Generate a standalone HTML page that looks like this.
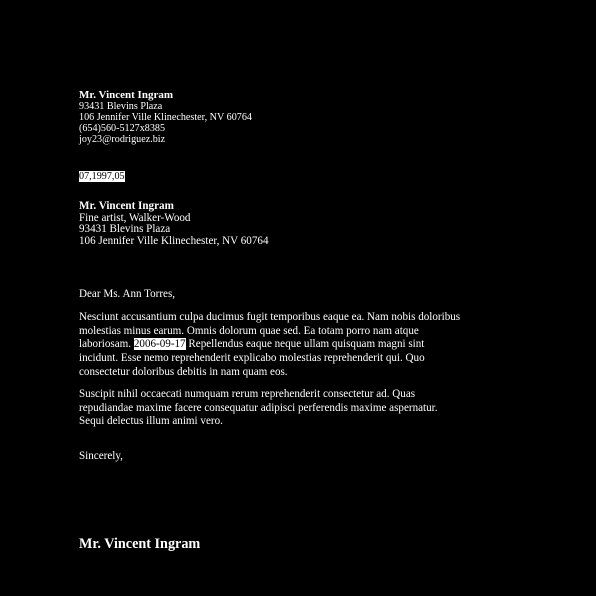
<!DOCTYPE html>
<html><head><style>
html,body{margin:0;padding:0;background:#000;width:596px;height:596px;overflow:hidden}
body{position:relative;color:#fff;font-family:"Liberation Serif",serif}
.b{position:absolute;left:79px;white-space:nowrap}
.hl{background:#fff;color:#000}
</style></head><body>
<div class="b" style="top:89px;font-size:10.15px;line-height:11px"><b style="font-size:11px;line-height:12px">Mr. Vincent Ingram</b><br>93431 Blevins Plaza<br>106 Jennifer Ville Klinechester, NV 60764<br>(654)560-5127x8385<br>joy23@rodriguez.biz</div>
<div class="b" style="top:171px;font-size:10.15px;line-height:12px"><span class="hl">07,1997,05</span></div>
<div class="b" style="top:201px;font-size:11.1px;line-height:11.7px"><b>Mr. Vincent Ingram</b><br>Fine artist, Walker-Wood<br>93431 Blevins Plaza<br>106 Jennifer Ville Klinechester, NV 60764</div>
<div class="b" style="top:288px;font-size:11.1px;line-height:13.7px">Dear Ms. Ann Torres,</div>
<div class="b" style="top:311px;font-size:11.1px;line-height:13.7px">Nesciunt accusantium culpa ducimus fugit temporibus eaque ea. Nam nobis doloribus<br>molestias minus earum. Omnis dolorum quae sed. Ea totam porro nam atque<br>laboriosam. <span class="hl">2006-09-17</span> Repellendus eaque neque ullam quisquam magni sint<br>incidunt. Esse nemo reprehenderit explicabo molestias reprehenderit qui. Quo<br>consectetur doloribus debitis in nam quam eos.</div>
<div class="b" style="top:388px;font-size:11.1px;line-height:13.7px">Suscipit nihil occaecati numquam rerum reprehenderit consectetur ad. Quas<br>repudiandae maxime facere consequatur adipisci perferendis maxime aspernatur.<br>Sequi delectus illum animi vero.</div>
<div class="b" style="top:450px;font-size:11.1px;line-height:13.7px">Sincerely,</div>
<div class="b" style="top:536px;font-size:14.2px;line-height:17px;font-weight:bold">Mr. Vincent Ingram</div>
</body></html>
